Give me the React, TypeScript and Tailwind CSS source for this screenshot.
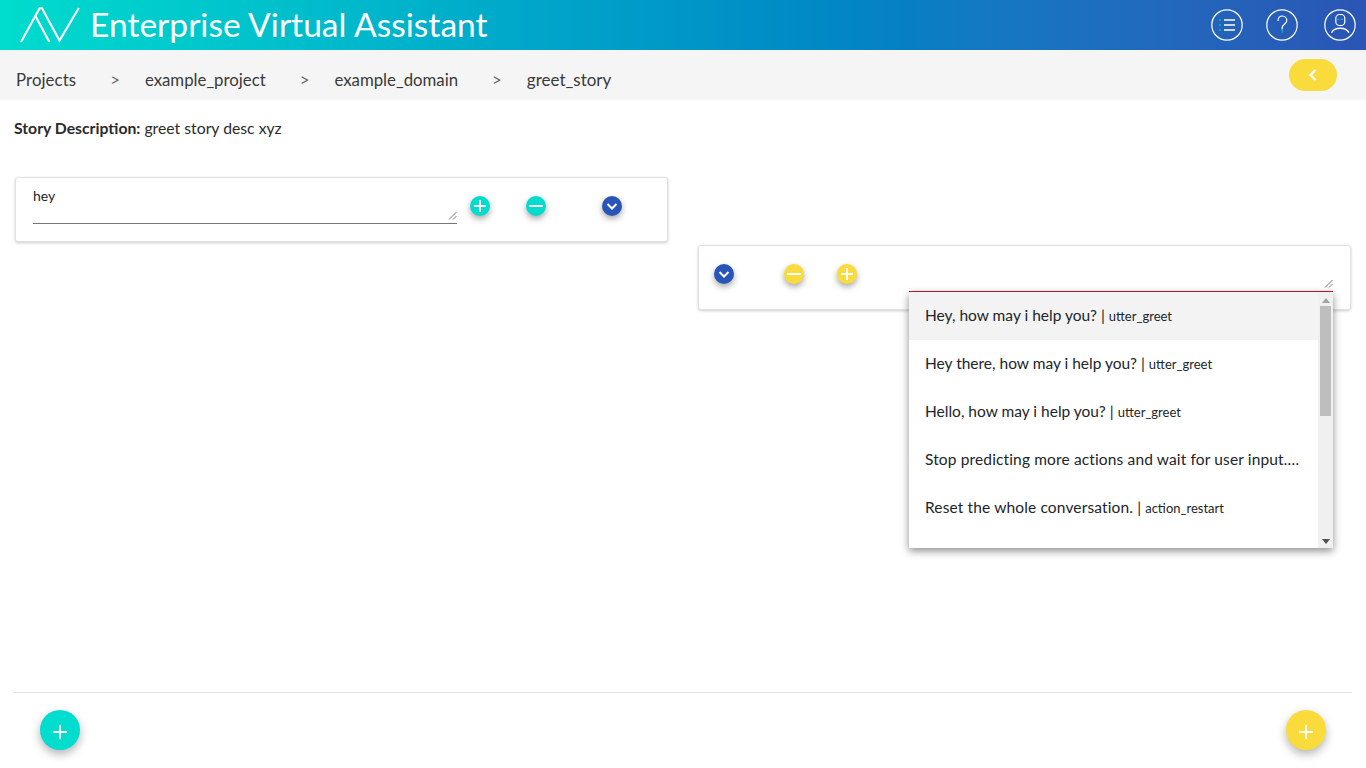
import React from "react";

const font = { fontFamily: "Lato, 'Open Sans', sans-serif" };

function Plus({ size = 12, sw = 2 }: { size?: number; sw?: number }) {
  return (
    <svg width={size} height={size} viewBox="0 0 12 12" fill="none" stroke="white" strokeWidth={sw}>
      <path d="M6 0v12M0 6h12" />
    </svg>
  );
}
function Minus({ size = 14 }: { size?: number }) {
  return (
    <svg width={size} height={size} viewBox="0 0 14 14" fill="none" stroke="white" strokeWidth="2">
      <path d="M0 7h14" />
    </svg>
  );
}
function Down() {
  return (
    <svg width="12" height="12" viewBox="0 0 12 12" fill="none" stroke="white" strokeWidth="2">
      <path d="M1.5 4l4.5 4.5L10.5 4" />
    </svg>
  );
}
function Round({ bg, children }: { bg: string; children: React.ReactNode }) {
  return (
    <div className={`w-5 h-5 rounded-full flex items-center justify-center shadow-[0_3px_6px_rgba(0,0,0,0.35)] ${bg}`}>
      {children}
    </div>
  );
}
function Item({ a, b, active, wide }: { a: string; b?: string; active?: boolean; wide?: boolean }) {
  return (
    <div className={`h-12 pl-4 flex items-center whitespace-nowrap text-[15.5px] text-[#212529] ${active ? "bg-[#f3f3f3]" : ""}`}>
      <span className={wide ? "tracking-[0.14px]" : ""}>{a}</span>
      {b && <span className="ml-1 text-[13px] mt-0.5">{b}</span>}
    </div>
  );
}

export default function App() {
  return (
    <div className="h-screen flex flex-col bg-white overflow-hidden" style={font}>
      <header className="h-[50px] shrink-0 flex items-center bg-gradient-to-r from-[#00dccd] via-[#0580c4] via-[66%] to-[#2a55b5]">
        <svg className="ml-[20px]" width="60" height="36" viewBox="0 0 60 36" fill="none" stroke="white" strokeWidth="2.1">
          <path d="M1 35 19.6 1.2H22L39.5 33.5 58.8 1" />
          <path d="M15.4 8.9 29.4 35" />
        </svg>
        <div className="ml-[10px] text-[33.6px] text-white leading-none">Enterprise Virtual Assistant</div>
        <div className="ml-auto mr-[10px] flex items-center">
          <svg width="32" height="32" viewBox="0 0 32 32" fill="none" stroke="white" strokeWidth="1.2">
            <circle cx="16" cy="16" r="15.2" />
            <path d="M13 11h11M13 16h11M13 21h11" strokeWidth="1.3" />
            <path d="M8 11h2M8 16h2M8 21h2" stroke="#00b8cc" strokeWidth="1.6" />
          </svg>
          <svg className="ml-[23px]" width="32" height="32" viewBox="0 0 32 32" fill="none" stroke="white" strokeWidth="1.2">
            <circle cx="16" cy="16" r="15.2" />
            <path d="M12 12c0-3 1.9-5 4.4-5s4.4 2 4.4 4.8c0 3-4.6 3.4-4.6 7v1.7" />
            <path d="M16.2 20v4" stroke="#00b8cc" strokeWidth="1.2" />
          </svg>
          <svg className="ml-[26px]" width="32" height="32" viewBox="0 0 32 32" fill="none" stroke="white" strokeWidth="1.2">
            <circle cx="16" cy="16" r="15.2" />
            <rect x="11.8" y="5.5" width="9" height="11" rx="3.8" />
            <path d="M7.5 23.7c1.5-3 5-4.4 8.7-4.4s7.2 1.4 8.8 4.4" strokeWidth="1.4" />
            <path d="M13.5 10.3h2M17 10.3h2" stroke="#00b8cc" strokeWidth="1.2" />
          </svg>
        </div>
      </header>

      <nav className="h-[50px] shrink-0 bg-[#f5f5f5] flex items-center pl-4 pr-[29px] pt-[10px] text-[16.8px] text-[#3a3a3a]">
        <span className="tracking-[0.1px]">Projects</span>
        <span className="ml-[34px] mr-[25px] text-[#666]">&gt;</span>
        <span>example_project</span>
        <span className="ml-[34px] mr-[25px] text-[#666]">&gt;</span>
        <span>example_domain</span>
        <span className="ml-[34px] mr-[25px] text-[#666]">&gt;</span>
        <span className="text-[17px]">greet_story</span>
        <button className="ml-auto -mt-[10px] w-12 h-8 rounded-2xl bg-[#f9dc3c] flex items-center justify-center">
          <svg width="12" height="14" viewBox="0 0 12 14" fill="none" stroke="white" strokeWidth="2.4">
            <path d="M8.5 2 3.5 7l5 5" />
          </svg>
        </button>
      </nav>

      <main className="flex-1 flex flex-col px-[14px]">
        <div className="mt-[18px] text-[15.75px] leading-[20px] text-[#2b2b2b]">
          <b className="font-bold">Story Description:</b> greet story desc xyz
        </div>

        <div className="mt-[39px] grid grid-cols-[653px_653px] gap-x-[30px] pl-[1px]">
          <div className="col-start-1 row-start-1 self-start h-[65px] rounded-[3px] bg-white border border-[#e2e2e2] shadow-[0_1px_3px_rgba(0,0,0,0.2)] flex items-start pl-[17px]">
            <div className="relative w-[424px] h-[46px] border-b border-[#777] text-sm text-[#212529] pt-[8px]">
              hey
              <ResizeGrip />
            </div>
            <div className="ml-[13px] mt-[18px] flex">
              <Round bg="bg-[#00dccd]"><Plus /></Round>
              <div className="ml-[36px]"><Round bg="bg-[#00dccd]"><Minus /></Round></div>
              <div className="ml-[56px]"><Round bg="bg-[#2a55b8]"><Down /></Round></div>
            </div>
          </div>

          <div className="col-start-2 row-start-1 mt-[68px] h-[65px] relative rounded-[3px] bg-white border border-[#e2e2e2] shadow-[0_1px_3px_rgba(0,0,0,0.2)] flex items-start pl-[15px] pt-[18px]">
            <Round bg="bg-[#2a55b8]"><Down /></Round>
            <div className="ml-[50px]"><Round bg="bg-[#f9dc3c]"><Minus /></Round></div>
            <div className="ml-[33px]"><Round bg="bg-[#f9dc3c]"><Plus /></Round></div>
            <div className="absolute left-[210px] top-0 w-[424px] h-[46px] border-b border-[#d0102f]">
              <ResizeGrip />
            </div>

            <div className="absolute z-10 left-[210px] top-[46px] w-[424px] h-[256px] bg-white shadow-[0_3px_8px_rgba(0,0,0,0.45)] flex overflow-hidden">
              <div className="flex-1 min-w-0">
                <Item a="Hey, how may i help you? |" b="utter_greet" active />
                <Item a="Hey there, how may i help you? |" b="utter_greet" />
                <Item a="Hello, how may i help you? |" b="utter_greet" />
                <Item a="Stop predicting more actions and wait for user input.…" wide />
                <Item a="Reset the whole conversation. |" b="action_restart" wide />
              </div>
              <div className="w-[15px] bg-[#f0f0f0] flex flex-col items-center shrink-0">
                <svg className="mt-[6px]" width="8" height="5" viewBox="0 0 8 5" fill="#a3a3a3"><path d="M4 0l4 5H0z" /></svg>
                <div className="mt-[3px] w-[11px] h-[110px] bg-[#bebebe]" />
                <svg className="mt-auto mb-[4px]" width="8" height="5" viewBox="0 0 8 5" fill="#505050"><path d="M4 5l4-5H0z" /></svg>
              </div>
            </div>
          </div>
        </div>

        <div className="mt-auto h-[76px] shrink-0 border-t border-[#e2e2e2] flex items-start justify-between pl-[26px] pr-[26px] pt-[17px]">
          <button className="w-10 h-10 rounded-full bg-[#00dccd] flex items-center justify-center shadow-[0_4px_10px_rgba(0,0,0,0.3)]">
            <span className="mt-[3px]"><Plus size={14} sw={1.6} /></span>
          </button>
          <button className="w-10 h-10 rounded-full bg-[#f9dc3c] flex items-center justify-center shadow-[0_4px_10px_rgba(0,0,0,0.3)]">
            <span className="mt-[3px]"><Plus size={14} sw={1.6} /></span>
          </button>
        </div>
      </main>
    </div>
  );
}

function ResizeGrip() {
  return (
    <svg className="absolute right-0 bottom-[3px]" width="9" height="9" viewBox="0 0 9 9" fill="none" stroke="#555" strokeWidth="0.8">
      <path d="M1 8.5 8.5 1M5 8.5 8.5 5" />
    </svg>
  );
}
